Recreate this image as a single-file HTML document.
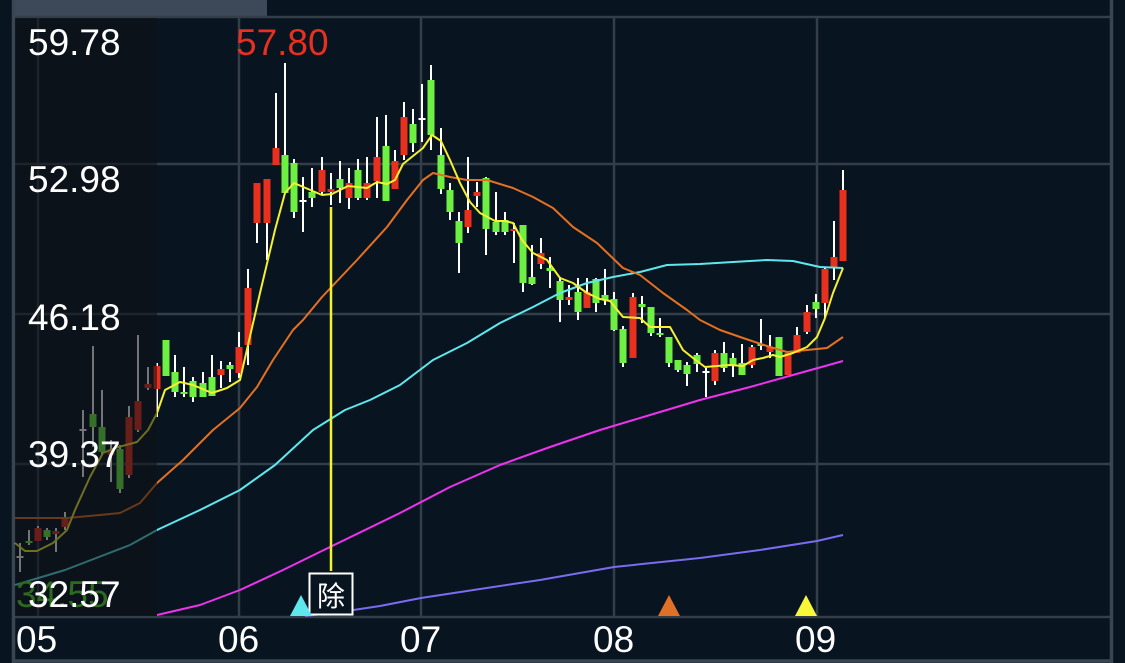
<!DOCTYPE html>
<html><head><meta charset="utf-8"><style>
html,body{margin:0;padding:0;background:#081420;overflow:hidden}
svg{display:block}
text{font-family:"Liberation Sans","Noto Sans CJK SC",sans-serif}
</style></head><body>
<svg id="s" width="1125" height="663" viewBox="0 0 1125 663" xmlns="http://www.w3.org/2000/svg">
<rect width="1125" height="663" fill="#081420"/>
<rect x="15" y="0" width="252" height="16" fill="#3d4958"/>
<g stroke="#333e49" stroke-width="2.5" fill="none">
<line x1="14" y1="17" x2="1112" y2="17"/>
<line x1="14" y1="164" x2="1112" y2="164"/>
<line x1="14" y1="314" x2="1112" y2="314"/>
<line x1="14" y1="464" x2="1112" y2="464"/>
<line x1="14" y1="617" x2="1112" y2="617"/>
<line x1="38" y1="17" x2="38" y2="617"/>
<line x1="239" y1="17" x2="239" y2="617"/>
<line x1="421" y1="17" x2="421" y2="617"/>
<line x1="614" y1="17" x2="614" y2="617"/>
<line x1="817" y1="17" x2="817" y2="617"/>
</g>
<g stroke="#3a4552" stroke-width="3.5" fill="none">
<line x1="13.5" y1="0" x2="13.5" y2="663"/>
<line x1="1111.5" y1="0" x2="1111.5" y2="663"/>
<line x1="12" y1="661" x2="1113" y2="661"/>
</g>
<g id="c"></g>
<g fill="none" stroke-width="2" stroke-linejoin="round">
<polyline stroke="#7a6bf0" points="305,616 340,612 380,606 421,598 480,589 540,580 614,567 700,558 760,550 817,541 843,535"/>
<polyline stroke="#ee33ee" points="157,615 200,605 240,590 283,570 330,547 400,513 450,487 500,465 550,447 600,430 650,415 700,400 750,387 800,373 843,361"/>
<polyline stroke="#5ee8ee" points="15,585 65,570 130,545 157,530 200,510 240,490 275,465 313,430 345,410 370,400 400,385 433,360 467,343 500,323 533,307 560,293 587,283 613,277 640,272 667,265 700,264 733,262 767,260 793,261 820,267 843,268"/>
<polyline stroke="#e57020" points="15,518 67,518 100,515 120,513 140,503 157,483 183,460 213,430 240,408 257,387 273,360 293,330 303,320 322,297 357,260 387,227 407,200 423,180 433,173 450,177 467,180 487,180 513,188 533,197 553,208 573,227 597,243 623,268 640,275 663,293 687,310 700,320 720,330 743,338 767,346 787,352 807,350 827,348 843,337"/>
<polyline stroke="#f5f030" points="15,543 25,551 37,551 53,543 67,530 75,510 90,477 103,453 115,448 137,442 148,430 157,413 165,390 180,382 193,385 212,393 227,388 240,380 248,345 260,293 275,230 285,193 294,183 322,195 332,194 348,186 367,188 377,182 387,184 395,180 403,164 423,148 432,135 441,141 450,160 460,183 470,202 480,213 495,221 505,221 513,223 522,240 533,253 547,260 560,278 573,283 587,293 600,299 610,301 623,317 640,318 650,327 670,327 683,350 693,358 705,367 717,366 730,365 743,366 753,360 763,358 773,355 780,357 793,353 807,347 817,337 825,318 833,293 843,268"/>
</g>
<line x1="331" y1="207" x2="331" y2="571" stroke="#f5f030" stroke-width="2.5"/>
<rect x="15" y="18" width="142" height="598" fill="#0e1217" fill-opacity="0.58"/>
<rect x="309.5" y="573.5" width="43" height="41" fill="#081420" stroke="#ffffff" stroke-width="2"/>
<text x="331" y="606" fill="#ffffff" font-size="28" text-anchor="middle">除</text>
<polygon points="290,616 312,616 301,595" fill="#5ee8ee"/>
<polygon points="658,616 680,616 669,595" fill="#e07028"/>
<polygon points="795,616 817,616 806,595" fill="#f8f838"/>
<g font-size="37" fill="#ffffff">
<text x="16" y="607" fill="#2c6a20">34.55</text>
<text x="28" y="55">59.78</text>
<text x="236" y="55" fill="#e8301f">57.80</text>
<text x="28" y="192">52.98</text>
<text x="28" y="330">46.18</text>
<text x="28" y="467">39.37</text>
<text x="28" y="607">32.57</text>
<text x="16" y="652">05</text>
<text x="218" y="652">06</text>
<text x="400" y="652">07</text>
<text x="593" y="652">08</text>
<text x="795" y="652">09</text>
</g>
</svg>
<script>
var d=[
[20,556,556,543,572,'w'],[29,541,543,530,545,'g'],[38,528,541,526,541,'r'],[47,530,537,528,540,'g'],[56,531,534,528,552,'r'],[65,517,527,512,530,'r'],
[83,429,431,410,477,'w'],[93,414,427,346,447,'g'],[102,427,452,390,455,'g'],[111,450,455,440,482,'r'],[120,449,489,445,493,'g'],[129,417,475,406,478,'r'],[138,401,430,335,432,'r'],[148,384,388,367,390,'r'],
[157,366,389,363,417,'r'],[166,340,376,340,376,'g'],[175,372,392,355,397,'g'],[184,392,394,367,397,'g'],[193,381,397,377,402,'g'],[203,383,397,372,397,'g'],[212,377,396,355,396,'g'],[221,369,375,361,388,'r'],[230,365,369,362,382,'g'],[239,347,373,332,378,'r'],[248,288,345,269,365,'r'],[257,183,223,183,243,'r'],[267,179,223,179,260,'r'],[276,148,165,93,165,'r'],[285,155,193,63,193,'g'],[294,163,212,159,218,'g'],[303,200,202,177,232,'w'],[312,192,198,168,207,'g'],[322,170,192,157,195,'r'],[331,189,192,173,205,'r'],[340,179,188,161,203,'g'],[349,183,198,168,209,'r'],[358,170,198,159,200,'g'],[367,183,198,157,200,'r'],[377,157,181,117,198,'r'],[386,146,201,115,201,'g'],[395,161,189,150,189,'r'],[404,117,155,102,160,'r'],[413,124,143,109,152,'g'],[422,118,120,84,142,'w'],[431,80,135,65,150,'g'],
[441,155,189,128,194,'g'],[450,190,212,183,220,'g'],[459,221,243,212,273,'g'],[468,210,227,157,233,'r'],[477,192,196,182,207,'r'],[486,178,229,177,255,'g'],[496,222,232,192,235,'g'],[505,220,232,212,235,'g'],[514,229,231,223,263,'r'],[523,225,283,225,292,'g'],[532,277,284,245,285,'g'],[541,253,264,238,269,'r'],[550,268,271,257,288,'g'],[560,281,300,277,322,'g'],[569,297,300,285,305,'r'],[578,292,312,278,320,'g'],[587,292,308,278,308,'r'],[596,279,303,278,312,'g'],[605,295,300,269,305,'g'],[614,299,330,292,331,'g'],[623,329,363,326,367,'g'],[633,297,358,293,358,'r'],[642,304,307,296,323,'g'],[651,307,333,307,336,'g'],[660,333,335,318,337,'g'],[669,337,363,337,367,'g'],[678,360,370,360,372,'g'],[687,365,374,362,386,'g'],[697,355,364,353,372,'g'],[706,371,373,368,397,'w'],[715,353,381,350,385,'r'],[724,353,368,342,372,'g'],[733,358,365,353,377,'g'],[742,363,375,344,375,'g'],[752,347,365,345,368,'r'],[761,344,346,319,350,'g'],[770,347,352,335,358,'r'],[779,337,376,337,376,'g'],[788,353,375,353,375,'r'],[797,335,353,327,353,'r'],[807,312,332,305,334,'r'],[816,302,309,294,318,'g'],[825,269,303,267,318,'r'],[834,257,267,221,280,'r'],[843,190,261,170,261,'r']];
var g=document.getElementById('c'),h='';
var col={r:'#e8301f',g:'#6ef043',w:'#ffffff'};
d.forEach(function(a){var x=a[0],c=col[a[5]];
h+='<line x1="'+x+'" y1="'+a[3]+'" x2="'+x+'" y2="'+a[4]+'" stroke="#ffffff" stroke-width="2"/>';
var t=a[1],b=a[2];if(b-t<2){b=t+2;}
h+='<rect x="'+(x-3.5)+'" y="'+t+'" width="7" height="'+(b-t)+'" fill="'+c+'"/>';});
g.innerHTML=h;
</script>
</body></html>
